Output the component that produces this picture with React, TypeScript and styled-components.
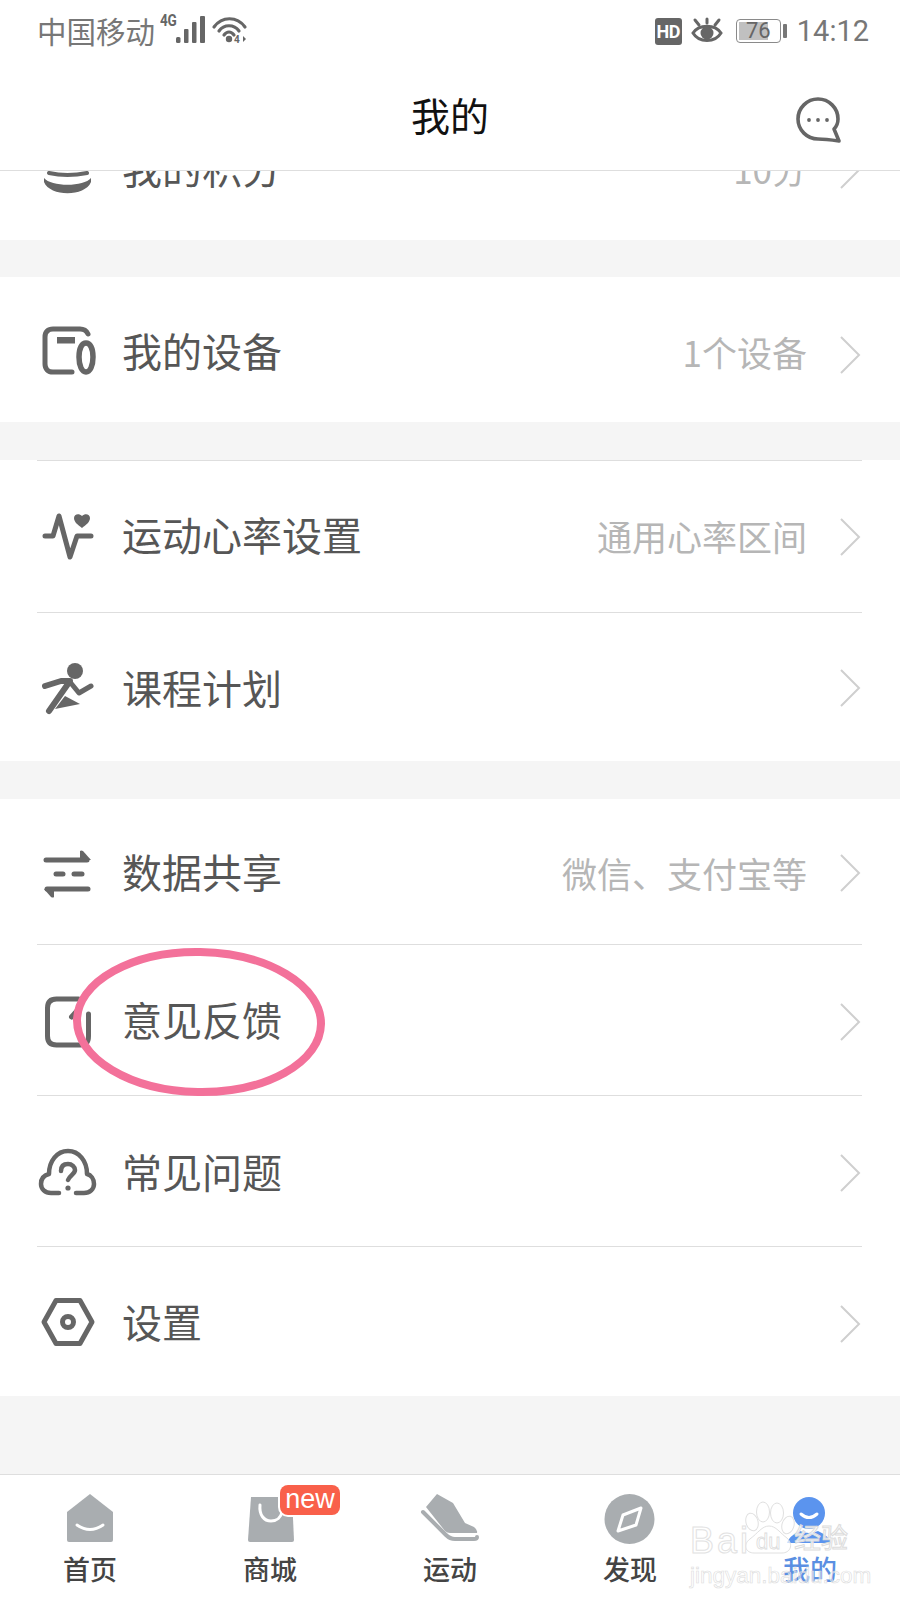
import React from "react";
import styled, { createGlobalStyle } from "styled-components";

const CJK = '"Noto Sans CJK SC", "Noto Sans", sans-serif';

const Global = createGlobalStyle`
  html, body { margin: 0; padding: 0; background: #fff; }
  * { box-sizing: border-box; }
`;

const Page = styled.div`
  position: relative;
  width: 900px;
  height: 1600px;
  display: flex;
  flex-direction: column;
  overflow: hidden;
  background: #f5f5f5;
  font-family: ${CJK};
`;

const TopArea = styled.header`
  flex: none;
  height: 171px;
  background: #fff;
  border-bottom: 1px solid #dedede;
  display: flex;
  flex-direction: column;
`;

const StatusBar = styled.div`
  height: 62px;
  padding: 0 31px 0 37px;
  display: flex;
  align-items: center;
  color: #777;
`;

const Carrier = styled.span`
  font-size: 29.5px;
  line-height: 1;
  width: 116px;
  white-space: nowrap;
`;

const SignalWrap = styled.div`
  position: relative;
  width: 100px;
  height: 62px;
  flex: none;
`;

const FourG = styled.span`
  position: absolute;
  left: 7px;
  top: 13px;
  font: 700 16px/1 "Roboto", sans-serif;
  letter-spacing: -0.5px;
  color: #666;
  transform: scaleX(0.85);
  transform-origin: left;
`;

const TinyFour = styled.span`
  position: absolute;
  left: 81px;
  top: 35px;
  font: 700 10px/1 "Roboto", sans-serif;
  color: #666;
`;

const StatusRight = styled.div`
  margin-left: auto;
  display: flex;
  align-items: center;
`;

const HdBadge = styled.span`
  width: 27px;
  height: 27px;
  border-radius: 3px;
  background: #666;
  color: #fff;
  font: 700 18px/27px "Roboto", sans-serif;
  text-align: center;
  letter-spacing: -0.5px;
  margin-right: 9px;
`;

const Battery = styled.div`
  position: relative;
  width: 45px;
  height: 24px;
  margin-left: 13px;
  border: 1.5px solid #8a8a8a;
  border-radius: 4px;
  padding: 2px;
  display: flex;
`;

const BatteryFill = styled.div`
  width: 76%;
  background: #c0c0c0;
`;

const BatteryText = styled.span`
  position: absolute;
  left: 0;
  right: 0;
  top: 0;
  text-align: center;
  font: 400 22px/21px "Roboto", sans-serif;
  color: #666;
`;

const BatteryCap = styled.span`
  width: 4px;
  height: 14px;
  margin-left: 2px;
  background: #777;
  border-radius: 1px;
`;

const Clock = styled.span`
  margin-left: 10px;
  font: 400 29px/1 "Roboto", sans-serif;
  color: #777;
`;

const TitleBar = styled.div`
  flex: 1;
  position: relative;
  display: flex;
  align-items: center;
  justify-content: center;
`;

const Title = styled.h1`
  margin: 0 0 4px 0;
  font-size: 39px;
  font-weight: 400;
  line-height: 1;
  color: #111;
`;

const MessageButton = styled.div`
  position: absolute;
  left: 794px;
  top: 34px;
  width: 48px;
  height: 48px;
`;

const Scroll = styled.main`
  flex: 1;
  min-height: 0;
  overflow: hidden;
  display: flex;
  flex-direction: column;
`;

const Card = styled.section<{ $gap?: number }>`
  background: #fff;
  flex: none;
  margin-top: ${(p) => p.$gap ?? 0}px;
`;

const FirstCard = styled(Card)`
  margin-top: -76px;
`;

const Row = styled.div<{ $h: number; $pad: number; $line?: boolean }>`
  height: ${(p) => p.$h}px;
  margin: 0 38px 0 37px;
  padding-top: ${(p) => p.$pad}px;
  display: flex;
  align-items: center;
  border-top: ${(p) => (p.$line ? "1px solid #dedede" : "0")};
`;

const IconSvg = styled.svg`
  width: 60px;
  height: 60px;
  flex: none;
  color: #666;
`;

const Label = styled.span`
  margin: 0 0 6px 25px;
  font-size: 40px;
  line-height: 1;
  color: #565656;
  white-space: nowrap;
`;

const Value = styled.span`
  margin: 0 0 2px auto;
  font-size: 35px;
  line-height: 1;
  color: #b6b6b6;
  white-space: nowrap;
`;

const Chevron = styled.svg<{ $alone?: boolean; $dy: number }>`
  flex: none;
  width: 22px;
  height: 40px;
  margin-left: ${(p) => (p.$alone ? "auto" : "32px")};
  margin-right: 1px;
  margin-top: ${(p) => p.$dy}px;
`;

const Annotation = styled.svg`
  position: absolute;
  left: 65px;
  top: 941px;
  width: 270px;
  height: 165px;
  pointer-events: none;
`;

const TabBar = styled.nav`
  position: relative;
  flex: none;
  height: 126px;
  background: #fff;
  border-top: 1px solid #dedede;
  display: grid;
  grid-template-columns: repeat(5, 180px);
`;

const Tab = styled.div`
  position: relative;
  display: flex;
  flex-direction: column;
  align-items: center;
  padding-top: 13px;
`;

const TabIcon = styled.svg`
  width: 60px;
  height: 60px;
  flex: none;
`;

const TabLabel = styled.span<{ $active?: boolean }>`
  margin-top: 6px;
  font-size: 27px;
  line-height: 1.1;
  font-weight: 500;
  color: ${(p) => (p.$active ? "#5b8fe2" : "#444")};
`;

const NewBadge = styled.span`
  position: absolute;
  left: 100px;
  top: 10px;
  width: 60px;
  height: 30px;
  border-radius: 8px;
  background: #f9604a;
  box-shadow: 0 0 0 2px #fff;
  color: #fff;
  font: 400 27px/28px "Liberation Sans", sans-serif;
  text-align: center;
`;

const Watermark = styled.div`
  position: absolute;
  left: 690px;
  top: 1495px;
  width: 165px;
  height: 95px;
  pointer-events: none;
`;

const WmBai = styled.span`
  position: absolute;
  left: 0;
  top: 28px;
  font: 400 36px/1 "Liberation Sans", sans-serif;
  letter-spacing: 3px;
  color: rgba(255, 255, 255, 0.75);
  -webkit-text-stroke: 1px #e2e2e2;
`;

const WmDu = styled.span`
  position: absolute;
  left: 66px;
  top: 36px;
  font: 400 22px/1 "Liberation Sans", sans-serif;
  color: transparent;
  -webkit-text-stroke: 0.8px #dcdcdc;
`;

const WmJy = styled.span`
  position: absolute;
  left: 104px;
  top: 28px;
  font: 400 27px/1 ${CJK};
  color: rgba(255, 255, 255, 0.85);
  -webkit-text-stroke: 1px #dcdcdc;
  white-space: nowrap;
`;

const WmUrl = styled.span`
  position: absolute;
  left: 0;
  top: 70px;
  font: 400 22.5px/1 "Liberation Sans", sans-serif;
  color: rgba(255, 255, 255, 0.45);
  -webkit-text-stroke: 0.6px #dcdcdc;
  white-space: nowrap;
`;

const stroke = {
  fill: "none",
  stroke: "currentColor",
  strokeLinecap: "round" as const,
  strokeLinejoin: "round" as const,
};

const Arrow = ({ alone, dy }: { alone?: boolean; dy: number }) => (
  <Chevron $alone={alone} $dy={dy} viewBox="0 0 22 40">
    <path d="M2 2 L20 20 L2 38" fill="none" stroke="#cfcfcf" strokeWidth="2" />
  </Chevron>
);

const CoinsIcon = () => (
  <IconSvg viewBox="0 3 60 60">
    <path d="M12 36 Q30 40 50 36" fill="none" stroke="currentColor" strokeWidth="4" strokeLinecap="round" />
    <path d="M7 41 C14 50 47 50 54 41 L54 45 C48 60 13 60 7 45 Z" fill="currentColor" />
  </IconSvg>
);

const DeviceIcon = () => (
  <IconSvg viewBox="0 3 60 60">
    <g {...stroke} strokeWidth="5">
      <path d="M51 14 C49 10 47 9 43 9 H16 C11 9 8 12 8 17 V44 C8 49 11 52 16 52 H35" />
      <path d="M49 23 C53 23 56 28 56 37 C56 46 53 52 49 52 C45 52 42 46 42 37 C42 28 45 23 49 23 Z" strokeWidth="5.5" />
    </g>
    <rect x="20" y="17" width="18" height="6.5" fill="currentColor" />
  </IconSvg>
);

const HeartIcon = () => (
  <IconSvg viewBox="0 0 60 60">
    <path {...stroke} strokeWidth="5" d="M8 29 H16 L22 9 L33 50 L40 29 H54" />
    <path d="M45 21 C41 18 37 15 37 11 C37 7 42 6 45 9 C48 6 53 7 53 11 C53 15 49 18 45 21 Z" fill="currentColor" />
  </IconSvg>
);

const RunnerIcon = () => (
  <IconSvg viewBox="0 3 60 60">
    <circle cx="38" cy="14" r="8" fill="currentColor" />
    <g {...stroke} strokeWidth="6">
      <path d="M8 29 L24 24 H33 L12 54" />
      <path d="M33 25 L42 36 L54 29" strokeWidth="5" />
    </g>
    <path d="M18 52 L28 39 L43 47 Z" fill="currentColor" />
  </IconSvg>
);

const ShareIcon = () => (
  <IconSvg viewBox="0 2 60 60">
    <g {...stroke} strokeWidth="5">
      <path d="M9 18 H50" />
      <path d="M10 47 H51" />
      <path d="M19 32 H26" />
      <path d="M37 32 H45" />
    </g>
    <path d="M43 18 V9 Q44 8 46 9 L54 18 Z" fill="currentColor" />
    <path d="M17 47 V55 Q16 56 14 55 L7 47 Z" fill="currentColor" />
  </IconSvg>
);

const FeedbackIcon = () => (
  <IconSvg viewBox="-1.5 2 60 60">
    <g {...stroke} strokeWidth="5">
      <path d="M40 9 H18 C12 9 9 12 9 18 V46 C9 52 12 55 18 55 H42 C48 55 50 52 50 46 V24" />
      <path d="M33 27 L41 18" />
    </g>
  </IconSvg>
);

const CloudIcon = () => (
  <IconSvg viewBox="0 3 60 60">
    <g {...stroke} strokeWidth="4.5">
      <path d="M22 52 H14 C8 52 4 48 4 43 C4 37 8 34 12 33 C12 20 20 10 31 10 C42 10 50 20 50 33 C54 34 57 38 57 43 C57 48 53 52 47 52 H39" />
      <path d="M24 30 C24 25 27 23 31 23 C35 23 38 26 38 29 C38 33 33 34 31 39" />
    </g>
    <circle cx="31" cy="47" r="2.6" fill="currentColor" />
  </IconSvg>
);

const SettingIcon = () => (
  <IconSvg viewBox="0 2 60 60">
    <g {...stroke} strokeWidth="5">
      <path d="M7 30 L19 8.5 H43 L55 30 L43 51.5 H19 Z" />
      <circle cx="31" cy="30" r="5.5" />
    </g>
  </IconSvg>
);

const HomeTab = () => (
  <TabIcon viewBox="0 0 60 60">
    <path d="M30 6 L53 24 V52 Q53 54 51 54 H9 Q7 54 7 52 V24 Z" fill="#a9adb0" />
    <path d="M17 37 Q30 46 43 37" fill="none" stroke="#fff" strokeWidth="3" strokeLinecap="round" />
  </TabIcon>
);

const ShopTab = () => (
  <TabIcon viewBox="0 0 60 60">
    <path d="M11 9 H52 L54 52 Q54 54 52 54 H10 Q8 54 8 52 Z" fill="#a9adb0" />
    <path d="M20 17 C19 27 24 33 31 33 C37 33 41 29 42 24" fill="none" stroke="#fff" strokeWidth="3" strokeLinecap="round" />
  </TabIcon>
);

const ShoeTab = () => (
  <TabIcon viewBox="0 0 60 60">
    <path d="M17 6 L33 15 L45 35 L54 39 Q58 42 57 45 H30 Q27 45 25 43 L6 19 Z" fill="#a9adb0" />
    <path d="M3 24 L26 47 Q30 51 35 51 H54 Q57 51 57 49" fill="none" stroke="#a9adb0" strokeWidth="4" strokeLinecap="round" />
  </TabIcon>
);

const CompassTab = () => (
  <TabIcon viewBox="0 0 60 60">
    <circle cx="29.5" cy="31" r="25" fill="#a9adb0" />
    <path d="M41 20 L36 37 L18 43 L23 27 Z" fill="none" stroke="#fff" strokeWidth="3" strokeLinejoin="round" />
  </TabIcon>
);

const MeTab = () => (
  <TabIcon viewBox="0 0 60 60">
    <circle cx="29" cy="25" r="16" fill="#5b94ee" />
    <path d="M21 26 Q29 33 37 26" fill="none" stroke="#fff" strokeWidth="3" strokeLinecap="round" />
    <path d="M7 55 Q9 48 20 43 Q29 47 38 43 Q49 48 51 55 Z" fill="#5b94ee" />
  </TabIcon>
);

type RowData = {
  icon: React.ReactNode;
  label: string;
  value?: string;
  h: number;
  pad: number;
  line?: boolean;
  dy?: number;
};

const rowsA: RowData[] = [
  { icon: <DeviceIcon />, label: "我的设备", value: "1个设备", h: 145, pad: 6, dy: 4 },
];
const rowsB: RowData[] = [
  { icon: <HeartIcon />, label: "运动心率设置", value: "通用心率区间", h: 152, pad: 0, line: true },
  { icon: <RunnerIcon />, label: "课程计划", h: 149, pad: 6, line: true, dy: -4 },
];
const rowsC: RowData[] = [
  { icon: <ShareIcon />, label: "数据共享", value: "微信、支付宝等", h: 146, pad: 4, dy: -2 },
  { icon: <FeedbackIcon />, label: "意见反馈", h: 151, pad: 4, line: true },
  { icon: <CloudIcon />, label: "常见问题", h: 151, pad: 6, line: true, dy: -2 },
  { icon: <SettingIcon />, label: "设置", h: 150, pad: 4, line: true },
];

const MenuRow = ({ r }: { r: RowData }) => (
  <Row $h={r.h} $pad={r.pad} $line={r.line}>
    {r.icon}
    <Label>{r.label}</Label>
    {r.value && <Value>{r.value}</Value>}
    <Arrow alone={!r.value} dy={r.dy ?? 0} />
  </Row>
);

export default function App() {
  return (
    <Page>
      <Global />
      <TopArea>
        <StatusBar>
          <Carrier>中国移动</Carrier>
          <SignalWrap>
            <FourG>4G</FourG>
            <svg width="100" height="62" viewBox="0 0 100 62">
              <g fill="#666">
                <rect x="23" y="37" width="4.5" height="6" rx="1.5" />
                <rect x="31" y="29" width="4.5" height="14" rx="1" />
                <rect x="39" y="22" width="4.5" height="21" rx="1" />
                <rect x="47" y="16" width="5" height="27" rx="1" />
                <circle cx="76" cy="39" r="3.2" />
                <path d="M90 36 V42 L93 39 Z" />
              </g>
              <g fill="none" stroke="#666" strokeWidth="3.2" strokeLinecap="round">
                <path d="M61 27 C69 16 84 16 92 27" />
                <path d="M66 31 C71 24 81 24 86 31" />
                <path d="M71 35 C74 31 78 31 81 35" />
              </g>
            </svg>
            <TinyFour>4</TinyFour>
          </SignalWrap>
          <StatusRight>
            <HdBadge>HD</HdBadge>
            <svg width="32" height="28" viewBox="0 0 32 28">
              <path d="M2 16 C8 7 24 7 30 16 C24 26 8 26 2 16 Z" fill="none" stroke="#666" strokeWidth="3" />
              <circle cx="16" cy="16" r="6.5" fill="#666" />
              <g stroke="#666" strokeWidth="3" strokeLinecap="round">
                <path d="M16 2 V6" />
                <path d="M4 3 L8 8" />
                <path d="M28 3 L24 8" />
              </g>
            </svg>
            <Battery>
              <BatteryFill />
              <BatteryText>76</BatteryText>
            </Battery>
            <BatteryCap />
            <Clock>14:12</Clock>
          </StatusRight>
        </StatusBar>
        <TitleBar>
          <Title>我的</Title>
          <MessageButton>
            <svg width="48" height="48" viewBox="0 0 48 48">
              <path
                d="M40 33 C43 30 44 27 44 23 C44 12 35 3 24 3 C13 3 4 12 4 23 C4 34 13 43 24 43 C30 43 38 44 45 45 Z"
                fill="none"
                stroke="#666"
                strokeWidth="3.6"
                strokeLinejoin="round"
              />
              <g fill="#666">
                <circle cx="15" cy="24" r="1.9" />
                <circle cx="24" cy="24" r="1.9" />
                <circle cx="33" cy="24" r="1.9" />
              </g>
            </svg>
          </MessageButton>
        </TitleBar>
      </TopArea>

      <Scroll>
        <FirstCard>
          <MenuRow r={{ icon: <CoinsIcon />, label: "我的积分", value: "10分", h: 145, pad: 4 }} />
        </FirstCard>
        <Card $gap={37}>
          {rowsA.map((r) => (
            <MenuRow key={r.label} r={r} />
          ))}
        </Card>
        <Card $gap={38}>
          {rowsB.map((r) => (
            <MenuRow key={r.label} r={r} />
          ))}
        </Card>
        <Card $gap={38}>
          {rowsC.map((r, i) => (
            <MenuRow key={r.label} r={i === 0 ? { ...r, h: 145 } : r} />
          ))}
        </Card>
      </Scroll>

      <TabBar>
        <Tab>
          <HomeTab />
          <TabLabel>首页</TabLabel>
        </Tab>
        <Tab>
          <ShopTab />
          <TabLabel>商城</TabLabel>
          <NewBadge>new</NewBadge>
        </Tab>
        <Tab>
          <ShoeTab />
          <TabLabel>运动</TabLabel>
        </Tab>
        <Tab>
          <CompassTab />
          <TabLabel>发现</TabLabel>
        </Tab>
        <Tab>
          <MeTab />
          <TabLabel $active>我的</TabLabel>
        </Tab>
      </TabBar>

      <Annotation viewBox="0 0 270 165">
        <ellipse cx="134" cy="81" rx="122" ry="70" fill="none" stroke="#f3719a" strokeWidth="8" transform="rotate(1 134 81)" />
      </Annotation>

      <Watermark>
        <svg width="165" height="95" viewBox="0 0 165 95">
          <g fill="rgba(255,255,255,0.7)" stroke="#e0e0e0" strokeWidth="1">
            <ellipse cx="62" cy="27" rx="6" ry="9" transform="rotate(-15 62 27)" />
            <ellipse cx="73" cy="17" rx="6.5" ry="10" />
            <ellipse cx="87" cy="18" rx="6.5" ry="10" />
            <ellipse cx="98" cy="30" rx="6" ry="9" transform="rotate(15 98 30)" />
            <path d="M79 31 C86 31 90 38 97 43 C104 50 100 58 92 58 H64 C56 58 52 50 60 44 C68 38 72 31 79 31 Z" />
          </g>
        </svg>
        <WmBai>Bai</WmBai>
        <WmDu>du</WmDu>
        <WmJy>经验</WmJy>
        <WmUrl>jingyan.baidu.com</WmUrl>
      </Watermark>
    </Page>
  );
}
